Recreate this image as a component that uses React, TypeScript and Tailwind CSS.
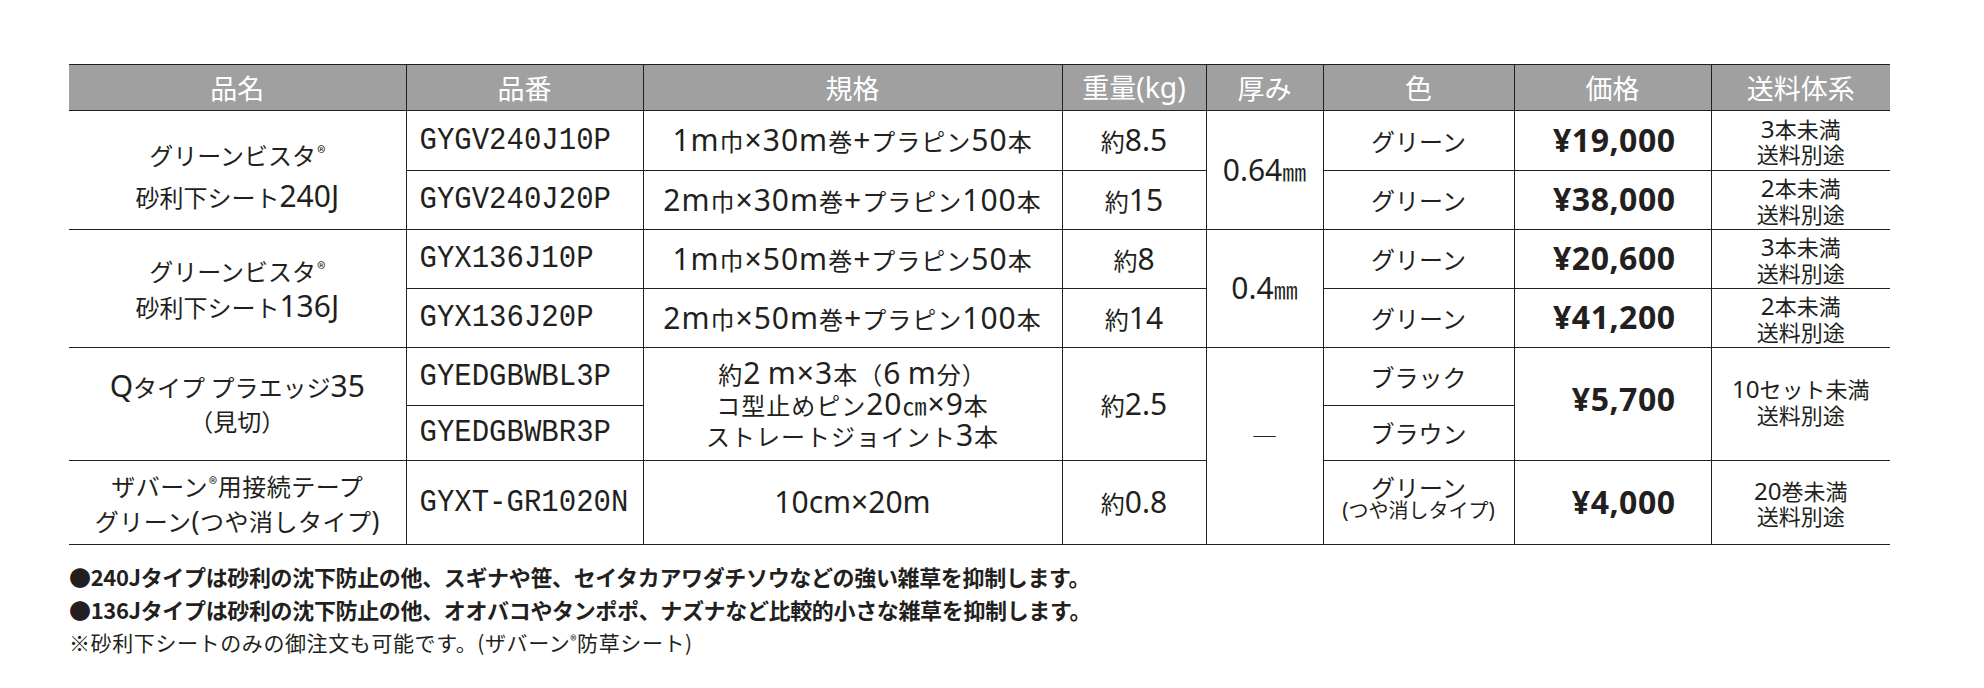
import React from 'react';

const jp = "font-['Noto_Sans_CJK_JP',sans-serif]";
const mono = "font-['Liberation_Mono','DejaVu_Sans_Mono',monospace]";
const line = 'border border-[#231f20]';

// latin/digit runs are set larger in a separate face, as in the print original
function T({ s, k = 'text-[1.25em]' }: { s: string; k?: string }) {
    const parts = s.split(/([0-9A-Za-z.,()+×\-]+)/);
    return (
        <>
            {parts.map((p, i) =>
                i % 2 === 1 ? (
                    <span key={i} className={`font-['Noto_Sans',sans-serif] ${k} leading-none`}>{p}</span>
                ) : (
                    <React.Fragment key={i}>{p}</React.Fragment>
                ),
            )}
        </>
    );
}

function Reg() {
    return <span className="relative -top-[6px] text-[17px] leading-none ml-[1px]">®</span>;
}

function Ship({ top }: { top: string }) {
    return (
        <div className="text-[22px] leading-[24px]">
            <div><T s={top} k="text-[1.1em]" /></div>
            <div>送料別途</div>
        </div>
    );
}

function Price({ v }: { v: string }) {
    return <span className="font-['Noto_Sans',sans-serif] text-[32px] font-bold tracking-[0.5px]">{v}</span>;
}

function Name({ a, b, lh = 'leading-[34px]' }: { a: React.ReactNode; b: React.ReactNode; lh?: string }) {
    return (
        <div className={lh}>
            <div>{a}</div>
            <div>{b}</div>
        </div>
    );
}

function Code({ c }: { c: string }) {
    return <span className="inline-block scale-y-110 origin-center">{c}</span>;
}

interface Cell {
    text: React.ReactNode;
    rowSpan?: number;
    className?: string;
}

const code = `${mono} text-left pl-[13px] text-[29px]`;
const price = 'text-right pr-[35px]';
const spec = 'text-center tracking-[1px]';

const rows: { h: string; cells: Cell[] }[] = [
    {
        h: 'h-[60px]',
        cells: [
            {
                text: <Name lh="leading-[42px]" a={<>グリーンビスタ<Reg /></>} b={<T s="砂利下シート240J" />} />,
                rowSpan: 2,
                className: 'text-center pt-[12px]',
            },
            { text: <Code c="GYGV240J10P" />, className: code },
            { text: <T s="1m巾×30m巻+プラピン50本" />, className: spec },
            { text: <T s="約8.5" /> },
            { text: <T s="0.64㎜" />, rowSpan: 2 },
            { text: 'グリーン' },
            { text: <Price v="¥19,000" />, className: price },
            { text: <Ship top="3本未満" /> },
        ],
    },
    {
        h: 'h-[59px]',
        cells: [
            { text: <Code c="GYGV240J20P" />, className: code },
            { text: <T s="2m巾×30m巻+プラピン100本" />, className: spec },
            { text: <T s="約15" /> },
            { text: 'グリーン' },
            { text: <Price v="¥38,000" />, className: price },
            { text: <Ship top="2本未満" /> },
        ],
    },
    {
        h: 'h-[59px]',
        cells: [
            {
                text: <Name lh="leading-[36px]" a={<>グリーンビスタ<Reg /></>} b={<T s="砂利下シート136J" />} />,
                rowSpan: 2,
            },
            { text: <Code c="GYX136J10P" />, className: code },
            { text: <T s="1m巾×50m巻+プラピン50本" />, className: spec },
            { text: <T s="約8" /> },
            { text: <T s="0.4㎜" />, rowSpan: 2 },
            { text: 'グリーン' },
            { text: <Price v="¥20,600" />, className: price },
            { text: <Ship top="3本未満" /> },
        ],
    },
    {
        h: 'h-[59px]',
        cells: [
            { text: <Code c="GYX136J20P" />, className: code },
            { text: <T s="2m巾×50m巻+プラピン100本" />, className: spec },
            { text: <T s="約14" /> },
            { text: 'グリーン' },
            { text: <Price v="¥41,200" />, className: price },
            { text: <Ship top="2本未満" /> },
        ],
    },
    {
        h: 'h-[58px]',
        cells: [
            { text: <Name a={<T s="Qタイプ プラエッジ35" />} b="（見切）" />, rowSpan: 2 },
            { text: <Code c="GYEDGBWBL3P" />, className: code },
            {
                text: (
                    <div className="leading-[30px]">
                        <div><T s="約2 m×3本（6 m分）" /></div>
                        <div><T s="コ型止めピン20" />㎝<T s="×9本" /></div>
                        <div><T s="ストレートジョイント3本" /></div>
                    </div>
                ),
                rowSpan: 2,
                className: spec,
            },
            { text: <T s="約2.5" />, rowSpan: 2 },
            { text: '―', rowSpan: 3, className: 'text-center text-[26px] pb-[22px]' },
            { text: 'ブラック' },
            { text: <Price v="¥5,700" />, rowSpan: 2, className: `${price} pb-[8px]` },
            { text: <Ship top="10セット未満" />, rowSpan: 2, className: 'text-center pb-[6px]' },
        ],
    },
    {
        h: 'h-[55px]',
        cells: [
            { text: <Code c="GYEDGBWBR3P" />, className: code },
            { text: 'ブラウン' },
        ],
    },
    {
        h: 'h-[84px]',
        cells: [
            {
                text: (
                    <Name
                        lh="leading-[35px]"
                        a={<span className="tracking-[0.5px]">ザバーン<Reg />用接続テープ</span>}
                        b={<span className="tracking-[0.5px]"><T s="グリーン(つや消しタイプ)" k="text-[1.1em]" /></span>}
                    />
                ),
            },
            { text: <Code c="GYXT-GR1020N" />, className: code },
            { text: <T s="10cm×20m" /> },
            { text: <T s="約0.8" /> },
            {
                text: (
                    <div className="leading-[25px]">
                        グリーン
                        <div className="text-[20px] leading-[22px]"><T s="(つや消しタイプ)" k="text-[1.05em]" /></div>
                    </div>
                ),
                className: 'text-center pb-[10px]',
            },
            { text: <Price v="¥4,000" />, className: price },
            { text: <Ship top="20巻未満" /> },
        ],
    },
];

const headers = ['品名', '品番', '規格', '重量(kg)', '厚み', '色', '価格', '送料体系'];
const widths = [337, 237, 419, 144, 117, 191, 197, 179];

export default function App() {
    return (
        <div className={`min-h-screen bg-white text-[#231f20] ${jp} pl-[69px] pt-[64px]`}>
            <table className="border-collapse table-fixed w-[1821px] [border-left-style:hidden] [border-right-style:hidden]">
                <colgroup>
                    {widths.map((w, i) => (
                        <col key={i} style={{ width: w }} />
                    ))}
                </colgroup>
                <thead>
                    <tr className="h-[46px] bg-[#a0a0a0]">
                        {headers.map((h) => (
                            <th key={h} className={`${line} font-normal text-white text-[27px] leading-none`}>
                                <T s={h} k="text-[1.05em]" />
                            </th>
                        ))}
                    </tr>
                </thead>
                <tbody>
                    {rows.map((r, i) => (
                        <tr key={i} className={r.h}>
                            {r.cells.map((c, j) => (
                                <td
                                    key={j}
                                    rowSpan={c.rowSpan}
                                    className={`${line} p-0 align-middle text-[24px] leading-[30px] ${c.className ?? 'text-center'}`}
                                >
                                    {c.text}
                                </td>
                            ))}
                        </tr>
                    ))}
                </tbody>
            </table>

            {/* notes */}
            <div className="mt-[18px] space-y-[6px] text-[22px] leading-[27px]">
                <p className="font-bold tracking-[-0.35px]">●240Jタイプは砂利の沈下防止の他、スギナや笹、セイタカアワダチソウなどの強い雑草を抑制します。</p>
                <p className="font-bold tracking-[-0.35px]">●136Jタイプは砂利の沈下防止の他、オオバコやタンポポ、ナズナなど比較的小さな雑草を抑制します。</p>
                <p className="text-[21px] tracking-[0.6px]">※砂利下シートのみの御注文も可能です。(ザバーン<span className="relative -top-[6px] text-[13px] leading-none">®</span>防草シート)</p>
            </div>
        </div>
    );
}
